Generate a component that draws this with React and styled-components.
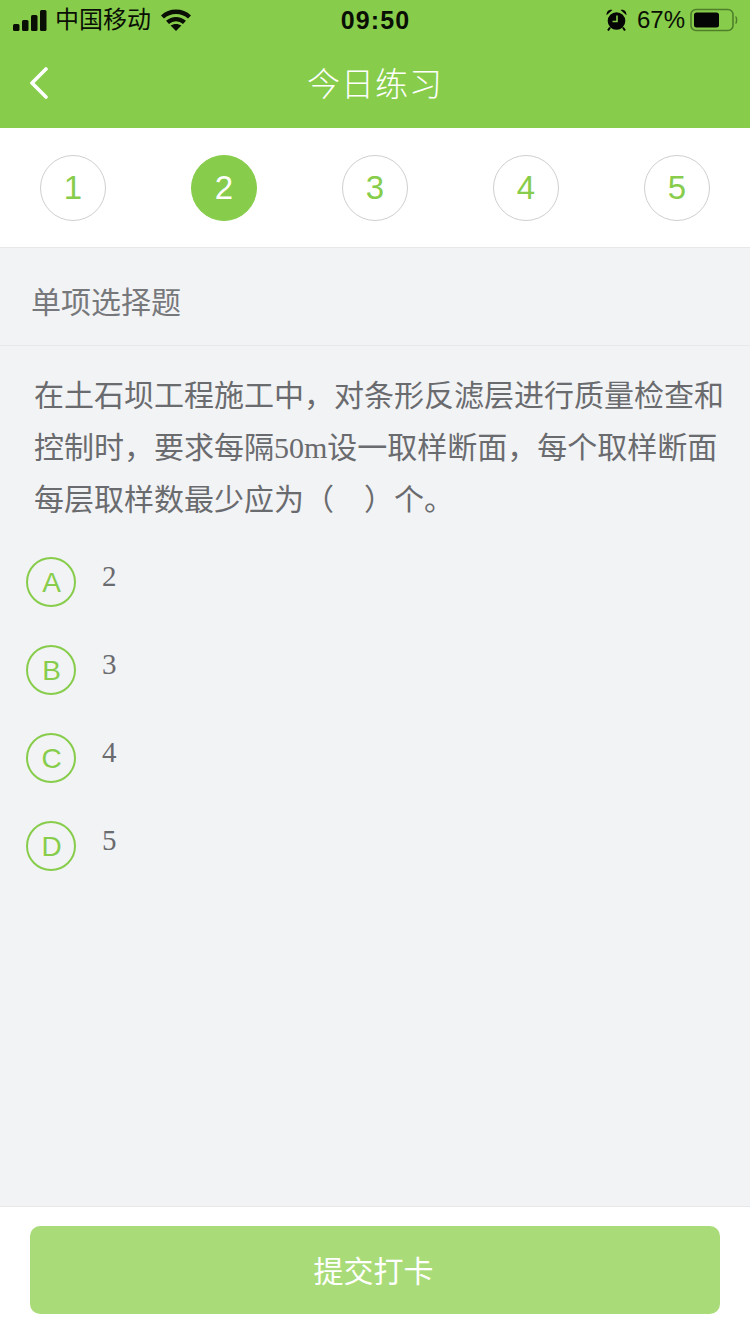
import React from 'react'
import styled, { createGlobalStyle } from 'styled-components'

const Global = createGlobalStyle`
    html, body {
        margin: 0;
        padding: 0;
        background: #f2f3f5;
    }
    * {
        box-sizing: border-box;
    }
`;

const Page = styled.div`
    width: 750px;
    height: 1334px;
    display: flex;
    flex-direction: column;
    background: #f2f3f5;
    overflow: hidden;
    font-family: "Liberation Sans", "Noto Sans CJK SC", sans-serif;
`;

const Header = styled.div`
    height: 128px;
    background: #87cd4b;
    display: flex;
    flex-direction: column;
`;

const StatusBar = styled.div`
    height: 40px;
    display: flex;
    align-items: center;
    justify-content: space-between;
    padding: 0 12px 0 13px;
    color: #0a0f05;
    font-size: 25px;
`;

const StatusSide = styled.div`
    width: 260px;
    display: flex;
    align-items: center;
    justify-content: ${p => (p.$right ? 'flex-end' : 'flex-start')};
`;

const Carrier = styled.span`
    margin: 0 10px 0 8px;
    font-size: 24px;
    line-height: 30px;
`;

const Clock = styled.span`
    font-size: 25px;
    font-weight: 700;
    letter-spacing: 1.1px;
`;

const Percent = styled.span`
    margin: 0 5px 0 10px;
    font-size: 24px;
`;

const NavBar = styled.div`
    flex: 1;
    display: flex;
    align-items: center;
    justify-content: center;
    position: relative;
    padding-bottom: 4px;
`;

const BackButton = styled.div`
    position: absolute;
    left: 29px;
    top: 27px;
    display: flex;
`;

const Title = styled.div`
    color: #fff;
    font-size: 33px;
    letter-spacing: 1px;
    font-weight: 300;
`;

const Steps = styled.div`
    height: 120px;
    background: #fff;
    border-bottom: 1px solid #e8e8e8;
    display: flex;
    align-items: center;
    justify-content: space-between;
    padding: 0 40px;
`;

const Step = styled.div`
    width: 66px;
    height: 66px;
    border-radius: 50%;
    display: flex;
    align-items: center;
    justify-content: center;
    font-size: 33px;
    border: 1px solid ${p => (p.$active ? '#87cd4b' : '#cfcfcf')};
    background: ${p => (p.$active ? '#87cd4b' : '#fff')};
    color: ${p => (p.$active ? '#fff' : '#87cd4b')};
`;

const SectionLabel = styled.div`
    height: 98px;
    padding: 6px 0 0 31px;
    display: flex;
    align-items: center;
    border-bottom: 1px solid #e8e9eb;
    color: #77787b;
    font-size: 30px;
`;

const Question = styled.div`
    padding: 24px 21px 0 34px;
    color: #6a6b6e;
    font-size: 30px;
    line-height: 52px;
    font-family: "Liberation Serif", "Noto Sans CJK SC", serif;
`;

const Options = styled.div`
    flex: 1;
    padding: 31px 0 0 26px;
    display: flex;
    flex-direction: column;
    gap: 38px;
`;

const Option = styled.div`
    height: 50px;
    display: flex;
    align-items: flex-start;
`;

const OptionBadge = styled.div`
    width: 50px;
    height: 50px;
    border-radius: 50%;
    border: 2px solid #87cd4b;
    color: #87cd4b;
    font-size: 28px;
    padding: 2px 0 0 1px;
    display: flex;
    align-items: center;
    justify-content: center;
    background: transparent;
`;

const OptionText = styled.div`
    margin-left: 26px;
    color: #6a6b6e;
    font-family: "Liberation Serif", serif;
    font-size: 29px;
    line-height: 38px;
`;

const Footer = styled.div`
    height: 128px;
    background: #fff;
    border-top: 1px solid #e8e8e8;
    padding: 19px 30px 0;
`;

const Submit = styled.div`
    height: 88px;
    border-radius: 10px;
    background: #a9dc78;
    color: #fff;
    font-size: 30px;
    padding: 0 3px 3px 0;
    display: flex;
    align-items: center;
    justify-content: center;
`;

function Signal() {
    return (
        <svg width="34" height="21" viewBox="0 0 34 21" fill="#0a0f05">
            <rect x="0" y="14" width="6.5" height="7" rx="1.5" />
            <rect x="9" y="10" width="6.5" height="11" rx="1.5" />
            <rect x="18" y="5" width="6.5" height="16" rx="1.5" />
            <rect x="27" y="0" width="6.5" height="21" rx="1.5" />
        </svg>
    )
}

function Wifi() {
    return (
        <svg width="30" height="22" viewBox="0 0 30 22" fill="none" stroke="#0a0f05" strokeWidth="4.4">
            <path d="M1.5 8C9 1 21 1 28.5 8" />
            <path d="M6.5 13.4C11.5 9 18.5 9 23.5 13.4" />
            <path d="M15 22L9.6 16.6C12.5 14.4 17.5 14.4 20.4 16.6Z" fill="#0a0f05" stroke="none" />
        </svg>
    )
}

function Alarm() {
    return (
        <svg width="21" height="22" viewBox="0 0 21 22">
            <circle cx="10.5" cy="12" r="8.8" fill="#050505" />
            <path d="M.6 6.2C.2 2.6 3 .2 6.4 1ZM20.4 6.2C20.8 2.6 18 .2 14.6 1Z" fill="#050505" />
            <path d="M4 18.5L2 21.5M17 18.5L19 21.5" stroke="#050505" strokeWidth="2" />
            <path d="M11 6.5V12.5H6.5" stroke="#87cd4b" strokeWidth="1.6" fill="none" />
        </svg>
    )
}

function Battery() {
    return (
        <svg width="48" height="24" viewBox="0 0 48 24">
            <rect x="1" y="1.5" width="42" height="21" rx="5" fill="none" stroke="#4f7f2a" strokeWidth="1.6" />
            <rect x="4" y="4.5" width="25" height="15" rx="2.5" fill="#050505" />
            <path d="M45.5 8.5C47 9.5 47 14.5 45.5 15.5" fill="none" stroke="#4f7f2a" strokeWidth="1.5" />
        </svg>
    )
}

function BackArrow() {
    return (
        <svg width="20" height="32" viewBox="0 0 20 32" fill="none" stroke="#fff" strokeWidth="3.6" strokeLinecap="round" strokeLinejoin="round">
            <path d="M17 2L3 16L17 30" />
        </svg>
    )
}

const steps = [1, 2, 3, 4, 5];
const options = [
    ['A', '2'],
    ['B', '3'],
    ['C', '4'],
    ['D', '5'],
];

export default function App() {
    return (
        <Page>
            <Global />
            <Header>
                <StatusBar>
                    <StatusSide>
                        <Signal />
                        <Carrier>中国移动</Carrier>
                        <Wifi />
                    </StatusSide>
                    <Clock>09:50</Clock>
                    <StatusSide $right>
                        <Alarm />
                        <Percent>67%</Percent>
                        <Battery />
                    </StatusSide>
                </StatusBar>
                <NavBar>
                    <BackButton>
                        <BackArrow />
                    </BackButton>
                    <Title>今日练习</Title>
                </NavBar>
            </Header>
            <Steps>
                {steps.map(n => (
                    <Step key={n} $active={n === 2}>{n}</Step>
                ))}
            </Steps>
            <SectionLabel>单项选择题</SectionLabel>
            <Question>
                在土石坝工程施工中，对条形反滤层进行质量检查和控制时，要求每隔50m设一取样断面，每个取样断面每层取样数最少应为（&nbsp;&nbsp;&nbsp;&nbsp;）个。
            </Question>
            <Options>
                {options.map(([letter, text]) => (
                    <Option key={letter}>
                        <OptionBadge>{letter}</OptionBadge>
                        <OptionText>{text}</OptionText>
                    </Option>
                ))}
            </Options>
            <Footer>
                <Submit>提交打卡</Submit>
            </Footer>
        </Page>
    )
}
